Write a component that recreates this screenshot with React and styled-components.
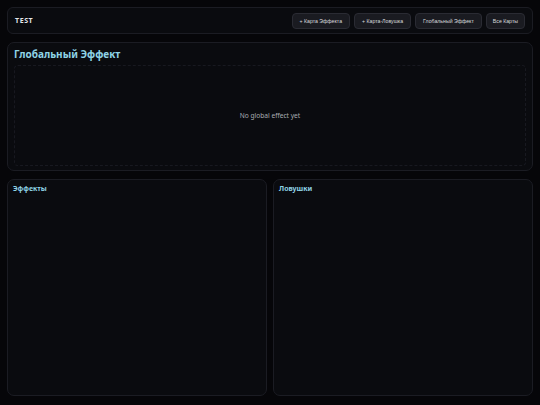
import React from 'react';
import styled, { createGlobalStyle } from 'styled-components';

const GlobalStyle = createGlobalStyle`
  html, body {
    margin: 0;
    padding: 0;
    background: #060609;
    height: 100%;
  }
  #root {
    height: 100%;
  }
`;

const Page = styled.div`
  box-sizing: border-box;
  height: 405px;
  padding: 7px 7px 9px 7px;
  display: flex;
  flex-direction: column;
  gap: 8px;
  font-family: "Noto Sans", "DejaVu Sans", sans-serif;
`;

const Header = styled.header`
  box-sizing: border-box;
  height: 27px;
  display: flex;
  align-items: center;
  justify-content: space-between;
  padding: 0 7px 0 7px;
  background: #0a0b0f;
  border: 1px solid #1b1c23;
  border-radius: 6px;
`;

const Brand = styled.div`
  font-size: 7px;
  font-weight: 700;
  letter-spacing: 0.6px;
  color: #e4e6ea;
`;

const Actions = styled.nav`
  display: flex;
  gap: 4px;
`;

const ActionButton = styled.button`
  box-sizing: border-box;
  height: 16px;
  padding: 0 ${(p) => p.$pad || 7}px;
  font-family: "Liberation Sans", Arial, sans-serif;
  font-size: 5.2px;
  color: #d8dade;
  background: #1a1b21;
  border: 1px solid #2a2b33;
  border-radius: 4px;
  cursor: pointer;
`;

const Panel = styled.section`
  box-sizing: border-box;
  background: #0a0b0f;
  border: 1px solid #1b1c23;
  border-radius: 7px;
`;

const GlobalPanel = styled(Panel)`
  height: 129px;
  display: flex;
  flex-direction: column;
  padding: 5px 6px 4px 6px;
`;

const Title = styled.h2`
  margin: 0;
  font-size: ${(p) => p.$size}px;
  font-weight: 700;
  color: #8fd3e6;
  line-height: 1.3;
`;

const EmptyBox = styled.div`
  flex: 1;
  margin-top: 4px;
  display: flex;
  align-items: center;
  justify-content: center;
  border: 1px dashed #181920;
  border-radius: 4px;
  font-size: 6.6px;
  color: #a9acb2;
`;

const Columns = styled.div`
  flex: 1;
  display: grid;
  grid-template-columns: 1fr 1fr;
  gap: 6px;
`;

const ListPanel = styled(Panel)`
  padding: 4px 5px;
`;

export default function App() {
  return (
    <>
      <GlobalStyle />
      <Page>
        <Header>
          <Brand>TEST</Brand>
          <Actions>
            <ActionButton>+ Карта Эффекта</ActionButton>
            <ActionButton>+ Карта-Ловушка</ActionButton>
            <ActionButton>Глобальный Эффект</ActionButton>
            <ActionButton $pad={6}>Все Карты</ActionButton>
          </Actions>
        </Header>
        <GlobalPanel>
          <Title $size={10}>Глобальный Эффект</Title>
          <EmptyBox>No global effect yet</EmptyBox>
        </GlobalPanel>
        <Columns>
          <ListPanel>
            <Title $size={7}>Эффекты</Title>
          </ListPanel>
          <ListPanel>
            <Title $size={7}>Ловушки</Title>
          </ListPanel>
        </Columns>
      </Page>
    </>
  );
}
